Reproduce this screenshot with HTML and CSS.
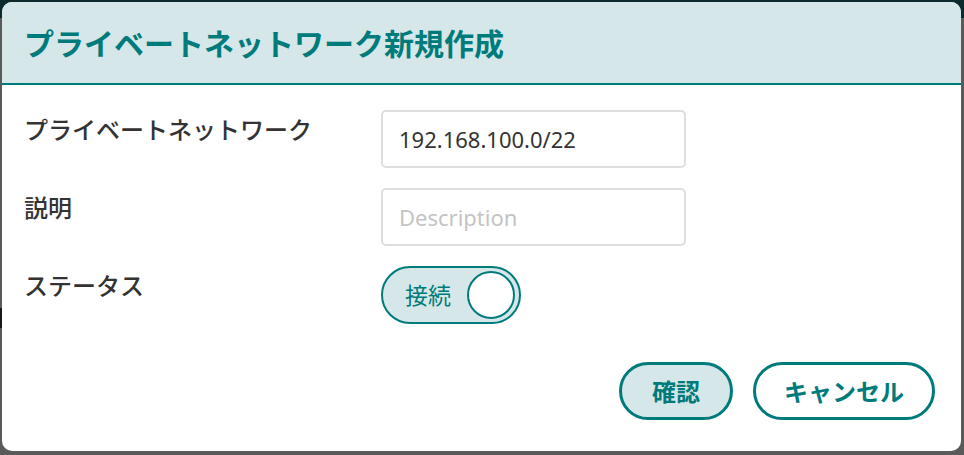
FILE: index.html
```html
<!DOCTYPE html>
<html lang="ja">
<head>
<meta charset="utf-8">
<title>プライベートネットワーク新規作成</title>
<link rel="stylesheet" href="styles.css">
</head>
<body>
<div class="backdrop">
  <div class="backdrop-bar"></div>
  <div class="backdrop-mark"></div>
</div>
<div class="dialog">
  <div class="dialog-header">
    <h1 class="dialog-title">プライベートネットワーク新規作成</h1>
  </div>
  <div class="dialog-body">
    <div class="form-grid">
      <div class="field-label">プライベートネットワーク</div>
      <div class="field-input">192.168.100.0/22</div>
      <div class="field-label">説明</div>
      <div class="field-input placeholder">Description</div>
      <div class="field-label">ステータス</div>
      <div class="toggle-cell">
        <div class="toggle">
          <span class="toggle-text">接続</span>
          <span class="toggle-knob"></span>
        </div>
      </div>
    </div>
    <div class="dialog-footer">
      <button class="btn btn-primary">確認</button>
      <button class="btn btn-secondary">キャンセル</button>
    </div>
  </div>
</div>
</body>
</html>
```

FILE: styles.css
```css
* { box-sizing: border-box; }

html, body {
  margin: 0;
  padding: 0;
  width: 964px;
  height: 455px;
  overflow: hidden;
}

body {
  background: #5a5a5a;
  font-family: "Noto Sans CJK JP", "Noto Sans", sans-serif;
  position: relative;
}

.backdrop {
  width: 964px;
  height: 455px;
}

.backdrop-bar {
  height: 18px;
  background: #0c2a2b;
}

.backdrop-mark {
  position: absolute;
  left: 0;
  top: 308px;
  width: 2px;
  height: 20px;
  background: #1a1a1a;
}

.dialog {
  position: absolute;
  left: 2px;
  top: 2px;
  width: 959px;
  height: 449px;
  background: #ffffff;
  border-radius: 10px;
  overflow: hidden;
  display: flex;
  flex-direction: column;
}

.dialog-header {
  height: 83px;
  background: #d5e7e9;
  border-bottom: 2px solid #007b7b;
  display: flex;
  align-items: center;
  padding-left: 22px;
}

.dialog-title {
  margin: 0;
  font-size: 30px;
  font-weight: 700;
  color: #007b7b;
  line-height: 1;
  padding-bottom: 2px;
}

.dialog-body {
  padding: 25px 26px 31px 22px;
  display: flex;
  flex-direction: column;
  flex: 1;
}

.form-grid {
  display: grid;
  grid-template-columns: 357px 305px;
  grid-auto-rows: 58px;
  row-gap: 20px;
}

.field-label {
  font-size: 24px;
  font-weight: 500;
  color: #333333;
  line-height: 1.2;
  padding-top: 5px;
}

.field-input {
  height: 58px;
  border: 2px solid #dedede;
  border-radius: 5px;
  padding-left: 16px;
  display: flex;
  align-items: center;
  font-family: "Noto Sans", sans-serif;
  font-size: 22px;
  color: #333333;
}

.field-input.placeholder {
  color: #c4c4c4;
}

.toggle-cell {
  display: flex;
  align-items: center;
}

.toggle {
  width: 140px;
  height: 58px;
  border: 2px solid #007b7b;
  border-radius: 29px;
  background: #d5e7e9;
  display: flex;
  align-items: center;
  justify-content: space-between;
  padding: 0 4px 0 22px;
}

.toggle-text {
  font-size: 23px;
  color: #007b7b;
  line-height: 1;
  padding-bottom: 2px;
}

.toggle-knob {
  width: 48px;
  height: 48px;
  border-radius: 50%;
  border: 2px solid #007b7b;
  background: #ffffff;
}

.dialog-footer {
  margin-top: auto;
  display: flex;
  justify-content: flex-end;
  gap: 20px;
}

.btn {
  height: 58px;
  border: 3px solid #007b7b;
  border-radius: 29px;
  font-family: "Noto Sans CJK JP", "Noto Sans", sans-serif;
  font-size: 24px;
  font-weight: 700;
  color: #007b7b;
  display: flex;
  align-items: center;
  justify-content: center;
  padding: 0 0 2px 0;
  cursor: pointer;
}

.btn-primary {
  width: 114px;
  background: #d5e7e9;
}

.btn-secondary {
  width: 182px;
  background: #ffffff;
}
```
